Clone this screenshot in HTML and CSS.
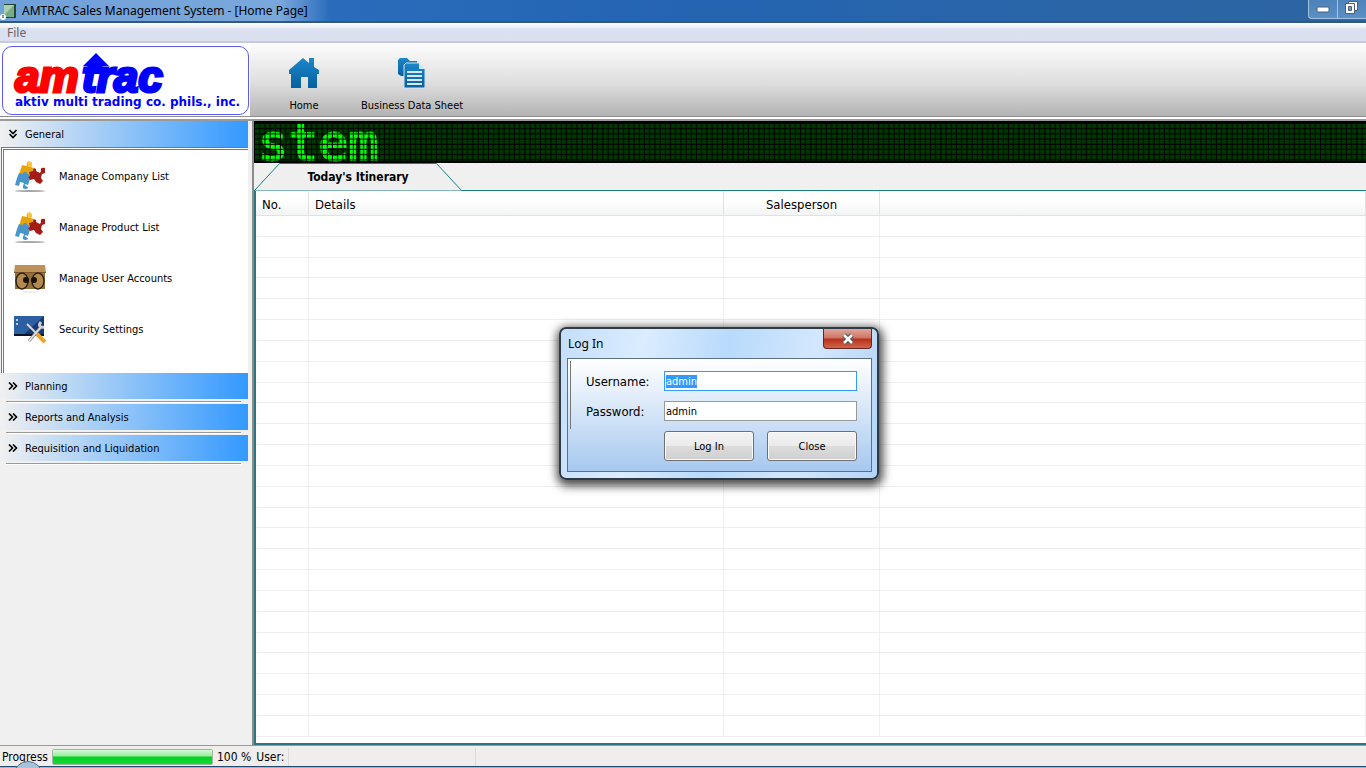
FILE: index.html
```html
<!DOCTYPE html>
<html lang="en">
<head>
  <meta charset="UTF-8">
  <title>AMTRAC Sales Management System</title>
  <link rel="stylesheet" href="styles.css">
</head>
<body>

<svg class="defs" width="0" height="0" aria-hidden="true">
  <symbol id="puzzle" viewBox="0 0 32 32">
    <ellipse cx="16" cy="30" rx="15" ry="1" fill="#a8a8a8"/>
    <path fill="#e8a30c" d="M8 4l5 1c-2-4 4-6 5-2 0 2-1 2-1 3l3 1-2 9-5-1-2-1-2 2-4-2z"/>
    <path fill="#f7c53a" d="M13 1c2-2 6 0 5 3l-1 2h-3z"/>
    <path fill="#a51c14" d="M15 11l4-1c0-4 4-3 3 0l4 2 1-2c-1-3 1-4 4-3v5l-3 1-1 4 2 3-3 3-4-2-2-3-4 1-3-3 3-1z"/>
    <path fill="#4795cb" d="M5 12l4 1c0-3 4-3 4 0l3 1-2 3 2 1-2 6-3-1c-1 2 3 2 3 4-2 2-6 1-5-2l1-3-4-1-1 4-4-1 2-7z"/>
  </symbol>
  <symbol id="box" viewBox="0 0 32 32">
    <ellipse cx="16" cy="29" rx="9" ry="1" fill="#eeeeee"/>
    <path fill="#94703b" d="M1 9h30v17H1z"/>
    <path fill="#bd9259" d="M1 2h30l1 7H0z"/>
    <path fill="#7a572c" d="M0 9h32v1H0z"/>
    <ellipse cx="8" cy="18" rx="6" ry="8" fill="#b48a4f" stroke="#2e2214" stroke-width="1.5"/>
    <ellipse cx="24" cy="18" rx="6" ry="8" fill="#b48a4f" stroke="#2e2214" stroke-width="1.5"/>
    <circle cx="12" cy="17" r="3" fill="#1a120a"/>
    <circle cx="20" cy="17" r="3" fill="#1a120a"/>
  </symbol>
  <symbol id="tools" viewBox="0 0 32 32">
    <path fill="#2d5fa3" d="M0 2h30v20H0z"/>
    <path fill="#173a75" d="M30 2v20H8z"/>
    <path fill="#0b1526" d="M0 20h30v2H0z"/>
    <path fill="#b6cdea" d="M2 5h2v2H2zm0 4h2v2H2z"/>
    <path stroke="#8d9298" stroke-width="3" d="M15 27L27 13"/>
    <path stroke="#e2e5e8" stroke-width="1.5" d="M15 27L27 13"/>
    <path fill="none" stroke="#cdd1d5" stroke-width="3" d="M27 8c-3 3-1 6 3 5"/>
    <path stroke="#d5d8da" stroke-width="2" d="M13 10l10 10"/>
    <path stroke="#f0a61c" stroke-width="4" d="M23 20l8 8"/>
  </symbol>
  <symbol id="right" viewBox="0 0 10 8">
    <path fill="none" stroke="#000" stroke-width="1.6" d="M1 .5L4.500 4 1 7.500M5 .5L8.500 4 5 7.500"/>
  </symbol>
  <symbol id="down" viewBox="0 0 10 10">
    <path fill="none" stroke="#000" stroke-width="1.6" d="M1.500 1L5 4.500 8.500 1M1.500 5L5 8.500 8.500 5"/>
  </symbol>
</svg>

<header class="titlebar">
  <svg class="app-icon" width="18" height="18" viewBox="0 0 18 18">
    <path fill="#23462f" d="M4 2h12v14H4z"/>
    <path fill="#76ab83" d="M4 3h10v12H4z"/>
    <path fill="#a9cfb1" d="M4 3h10L4 13z"/>
    <circle cx="3" cy="15" r="3" fill="#fff"/>
    <path stroke="#333" d="M3 13v3"/>
  </svg>
  <span class="title">AMTRAC Sales Management System - [Home Page]</span>
  <div class="window-buttons">
    <button type="button" aria-label="Minimize">
      <svg width="14" height="12"><rect x="1" y="5" width="12" height="5" rx="1" fill="#fff" stroke="#4c6178"/></svg>
    </button>
    <button type="button" aria-label="Restore">
      <svg width="14" height="13" fill="#fff" stroke="#4c6178"><path d="M3.500.5h9v9h-9z"/><path d="M.5 2.500h9v10h-9z"/><path fill="#6d9ac6" d="M3.500 5.500h3v4h-3z"/></svg>
    </button>
  </div>
</header>

<nav class="menubar"><button type="button">File</button></nav>

<div class="toolbar">
  <div class="logo">
    <svg width="245" height="67" viewBox="0 0 245 67" role="img" aria-label="amtrac">
      <g class="brand">
        <text x="12" y="45" fill="#f00" stroke="#f00">am</text>
        <text x="79" y="45" fill="#00f" stroke="#00f">trac</text>
      </g>
      <path fill="#00f" d="M93 6l13 13h-6l-3 8H84l2-8h-6z"/>
      <text class="tagline" x="12" y="59">aktiv multi trading co. phils., inc.</text>
    </svg>
  </div>
  <button type="button" class="tool">
    <svg width="32" height="32" viewBox="0 0 32 32">
      <linearGradient id="blue" x2="0" y2="1"><stop stop-color="#1b87c9"/><stop offset="1" stop-color="#07609f"/></linearGradient>
      <path fill="url(#blue)" d="M1 13L15 1l6 5V1h5v9l5 3v4h-2v14h-9V20h-7v11H3V17H1z"/>
    </svg>
    Home
  </button>
  <button type="button" class="tool">
    <svg width="32" height="32" viewBox="0 0 32 32">
      <path fill="url(#blue)" d="M4 1h7l3 3h7v2H11L8 9v10H5l-3-2V3z"/>
      <path fill="url(#blue)" stroke="#cfe3f0" d="M10 6h13l6 6v19H8V8z"/>
      <path fill="#d5e7f2" d="M23 6v6h6zM11 14h15v2H11zm0 4h15v2H11zm0 4h15v2H11zm0 4h15v2H11z"/>
    </svg>
    Business Data Sheet
  </button>
</div>

<div class="workspace">
  <aside class="sidebar">
    <button type="button" class="group"><svg width="10" height="10"><use href="#down"/></svg>General</button>
    <div class="items">
      <a href="#"><svg width="32" height="32"><use href="#puzzle"/></svg>Manage Company List</a>
      <a href="#"><svg width="32" height="32"><use href="#puzzle"/></svg>Manage Product List</a>
      <a href="#"><svg width="32" height="32"><use href="#box"/></svg>Manage User Accounts</a>
      <a href="#"><svg width="32" height="32"><use href="#tools"/></svg>Security Settings</a>
    </div>
    <button type="button" class="group"><svg width="10" height="8"><use href="#right"/></svg>Planning</button>
    <hr>
    <button type="button" class="group"><svg width="10" height="8"><use href="#right"/></svg>Reports and Analysis</button>
    <hr>
    <button type="button" class="group"><svg width="10" height="8"><use href="#right"/></svg>Requisition and Liquidation</button>
    <hr>
  </aside>

  <main class="main">
    <svg class="led">
      <defs>
        <pattern id="gaps" x="1" y="3" width="5.2" height="5.2" patternUnits="userSpaceOnUse">
          <path fill="#000" d="M4.200 0h1v5.200H0v-1h4.200z"/>
        </pattern>
      </defs>
      <rect width="100%" height="100%" fill="#000"/>
      <rect y="3" width="100%" height="37" fill="#003800"/>
      <text x="4" y="39">stem</text>
      <rect y="3" width="100%" height="37" fill="url(#gaps)"/>
    </svg>

    <div class="tabs">
      <button type="button" class="tab">
        <svg width="208" height="28"><path fill="#efefef" stroke="#1b7f86" d="M.5 27.500L25.500.5h157l25 27"/></svg>
        <span>Today's Itinerary</span>
      </button>
    </div>

    <div class="grid">
      <table>
        <thead>
          <tr><th class="no">No.</th><th class="details">Details</th><th class="person">Salesperson</th><th></th></tr>
        </thead>
        <tbody id="rows"></tbody>
      </table>
    </div>
  </main>
</div>

<footer class="statusbar">
  <label for="progress">Progress</label>
  <progress id="progress" value="100" max="100"></progress>
  <span class="percent">100 %</span>
  <span class="user">User:</span>
  <span class="cell"></span>
</footer>
<div class="taskbar"><span class="orb"></span></div>

<form class="dialog" onsubmit="return false">
  <div class="dialog-title">
    <h2>Log In</h2>
    <button type="button" class="close" aria-label="Close">
      <svg width="14" height="12" viewBox="0 0 14 12"><path stroke="#54575c" stroke-width="5" d="M3 2l8 8M11 2l-8 8"/><path stroke="#fff" stroke-width="2.500" d="M3 2l8 8M11 2l-8 8"/></svg>
    </button>
  </div>
  <div class="dialog-body">
    <label for="username">Username:</label>
    <input type="text" id="username" value="admin" autofocus>
    <label for="password">Password:</label>
    <input type="text" id="password" value="admin">
    <div class="actions">
      <button type="submit">Log In</button>
      <button type="button">Close</button>
    </div>
  </div>
</form>

<script>
  const rows = document.getElementById("rows");
  for (let i = 0; i < 25; i++) {
    rows.insertAdjacentHTML("beforeend", "<tr><td></td><td></td><td></td><td></td></tr>");
  }

  const username = document.getElementById("username");
  username.focus();
  username.select();
</script>
</body>
</html>
```
FILE: styles.css
```css
* {
  box-sizing: border-box;
}
body {
  margin: 0;
  height: 100vh;
  display: flex;
  flex-direction: column;
  overflow: hidden;
  background: #f0f0f0;
  color: #000;
  font-family: "DejaVu Sans Condensed", "DejaVu Sans", sans-serif;
  font-size: 11px;
}
button, input {
  font: inherit;
  color: inherit;
}
svg {
  flex: none;
}
.defs {
  position: absolute;
}

/* title bar and menu */
.titlebar {
  display: flex;
  align-items: center;
  height: 23px;
  background: linear-gradient(90deg, #6fa0d8, #7aa8dc 280px, #2a6cbb 330px, #2464b2 50%, #2d659f);
  border-bottom: 2px solid #33587f;
}
.title {
  margin-left: 4px;
  font: 12px "Noto Sans", sans-serif;
}
.window-buttons {
  display: flex;
  align-self: flex-start;
  margin-left: auto;
}
.window-buttons button {
  width: 29px;
  height: 19px;
  padding: 0;
  background: linear-gradient(#4d83ba, #5b8fc4);
  border: 1px solid #a3c3e2;
  border-top: 0;
  border-right: 0;
}
.window-buttons button:first-child {
  border-bottom-left-radius: 4px;
}
.menubar {
  height: 20px;
  background: linear-gradient(#fff, #e9edf7 5px, #dbe0f0 6px, #dbe1f1 18px, #c3cbdd 18px);
}
.menubar button {
  padding: 0 7px;
  border: 0;
  background: none;
  color: #666;
  font: 12px/19px "Noto Sans", sans-serif;
}

/* toolbar */
.toolbar {
  display: flex;
  height: 78px;
  background: linear-gradient(#fdfdfd, #dedede 40px, #b3b3b3 73px, #8f8f8f 73px, #8f8f8f 74px, #fff 74px, #fff 76px, #9a9a9a 76px);
}
.logo {
  width: 250px;
  height: 73px;
  padding: 3px 1px 1px 2px;
  background: #fff;
}
.logo svg {
  display: block;
  width: 247px;
  height: 69px;
  border: 1px solid #5a5af0;
  border-radius: 10px;
}
.brand {
  font: italic bold 44px "Liberation Sans", sans-serif;
  stroke-width: 3px;
}
.tagline {
  fill: #00f;
  font: bold 12px "DejaVu Sans", sans-serif;
}
.tool {
  display: flex;
  flex-direction: column;
  align-items: center;
  gap: 10px;
  height: 73px;
  padding: 14px 18px 0;
  border: 0;
  background: none;
}
.tool:nth-child(2) {
  margin-left: 20px;
}
.tool:nth-child(3) {
  margin-left: 5px;
}

/* side bar */
.workspace {
  flex: 1;
  min-height: 0;
  display: flex;
}
.sidebar {
  width: 254px;
  padding-right: 5px;
  border-right: 2px solid #8c8c8c;
}
.group {
  display: flex;
  align-items: center;
  gap: 7px;
  width: 248px;
  height: 26px;
  padding: 0 8px;
  border: 0;
  background: linear-gradient(90deg, #f0f0f0, #39f);
}
.items {
  width: 247px;
  height: 226px;
  margin-left: 1px;
  padding-top: 1px;
  background: #fff;
  border: 3px double #777;
  border-right: 0;
  border-bottom: 0;
}
.items a {
  display: flex;
  align-items: center;
  gap: 13px;
  height: 51px;
  padding-left: 10px;
  color: #000;
  text-decoration: none;
}
.sidebar hr {
  height: 2px;
  margin: 2px 6px 1px;
  border: 0;
  border-top: 1px solid #999;
  background: #fff;
}

/* main area */
.main {
  flex: 1;
  min-width: 0;
  display: flex;
  flex-direction: column;
}
.led {
  display: block;
  width: 100%;
  height: 42px;
}
.led text {
  fill: #0f0;
  stroke: #0f0;
  stroke-width: 2px;
  font: 50px "DejaVu Sans Mono", monospace;
}
.tabs {
  height: 28px;
  border-bottom: 1px solid #1b7f86;
}
.tab {
  display: grid;
  width: 208px;
  height: 28px;
  padding: 0;
  border: 0;
  background: none;
  font-size: 12px;
  font-weight: bold;
}
.tab svg, .tab span {
  grid-area: 1 / 1;
}
.tab span {
  align-self: center;
}
.grid {
  flex: 1;
  min-height: 0;
  padding-bottom: 6px;
  background: #fff;
  border: solid #2c777d;
  border-width: 0 0 2px 2px;
}
table {
  width: 100%;
  height: 100%;
  table-layout: fixed;
  border-collapse: separate;
  border-spacing: 0;
}
th {
  height: 25px;
  padding: 2px 6px 0;
  border: solid #e2e2e2;
  border-width: 0 1px 1px 0;
  background: linear-gradient(#fff 40%, #f3f4f5);
  font-size: 13px;
  font-weight: normal;
  text-align: left;
}
.no {
  width: 53px;
}
.details {
  width: 415px;
}
.person {
  width: 156px;
  text-align: center;
}
td {
  padding: 0;
  border: solid #efefef;
  border-width: 0 1px 1px 0;
}

/* status bar */
.statusbar {
  display: flex;
  align-items: center;
  height: 21px;
  padding: 1px 0 0 2px;
  background: #f0eded;
  border-top: 1px solid #999;
  font-size: 12px;
}
progress {
  appearance: none;
  width: 161px;
  height: 16px;
  margin: 0 4px;
  border: 1px solid #a5b5a5;
  border-radius: 2px;
}
progress::-webkit-progress-bar {
  background: #e6e6e6;
}
progress::-webkit-progress-value {
  background: linear-gradient(#d3fad6, #9cec9f 6px, #06cf26 7px, #12dc32);
}
.user {
  margin-left: 5px;
}
.cell {
  width: 188px;
  height: 18px;
  margin-left: 4px;
  border: solid #dcdada;
  border-width: 0 1px;
}
.taskbar {
  position: relative;
  height: 2px;
  background: #8fb9d8;
  border-top: 1px solid #27486b;
}
.orb {
  position: absolute;
  left: 13px;
  bottom: -23px;
  width: 30px;
  height: 30px;
  border: 1px solid #53718d;
  border-radius: 50%;
  background: #a9c2d8;
}

/* log in window */
.dialog {
  position: absolute;
  left: 559px;
  top: 327px;
  width: 320px;
  padding: 0 5px 6px 6px;
  border: 2px solid #2f3a47;
  border-radius: 7px;
  background: linear-gradient(100deg, #c4defa, #dbecfe 25%, #b8dafc 50%, #d3e7fc 75%, #b4d4f6);
  box-shadow: 1px 3px 10px 3px rgba(0,0,0,0.7);
}
.dialog-title {
  display: flex;
  justify-content: space-between;
  height: 29px;
}
.dialog h2 {
  margin: 6px 0 0 1px;
  font: 12px "Noto Sans", sans-serif;
}
.close {
  width: 49px;
  height: 20px;
  padding: 0;
  border: 1px solid #5c2a26;
  border-top: 0;
  border-radius: 0 0 4px 4px;
  background: linear-gradient(#e0a79d, #cf7565 9px, #b6301c 10px, #d4644a);
}
.close svg {
  display: block;
  margin: 0 auto;
}
.dialog-body {
  display: grid;
  grid-template-columns: 78px 193px;
  row-gap: 10px;
  align-items: center;
  padding: 12px 14px 10px 18px;
  border: 1px solid #5d7186;
  background: linear-gradient(90deg, transparent 2px, #777 2px, #777 3px, transparent 3px) 0 2px / 100% 68px no-repeat, linear-gradient(#fff, #d3e4f8 50%, #a6c8ef);
}
.dialog-body label {
  font-size: 13px;
}
.dialog-body input {
  height: 20px;
  padding: 0 1px;
  border: 1px solid #999;
  background: #fff;
}
.dialog-body input:focus {
  border-color: #39f;
  outline: 0;
}
input::selection {
  background: #39f;
  color: #fff;
}
.actions {
  grid-column: 2;
  display: flex;
  justify-content: space-between;
}
.actions button {
  width: 90px;
  height: 30px;
  border: 1px solid #707070;
  border-radius: 3px;
  background: linear-gradient(#f3f3f3, #ebebeb 50%, #dcdcdc 51%, #cfcfcf);
  box-shadow: inset 0 0 0 1px #fafafa;
}
```
